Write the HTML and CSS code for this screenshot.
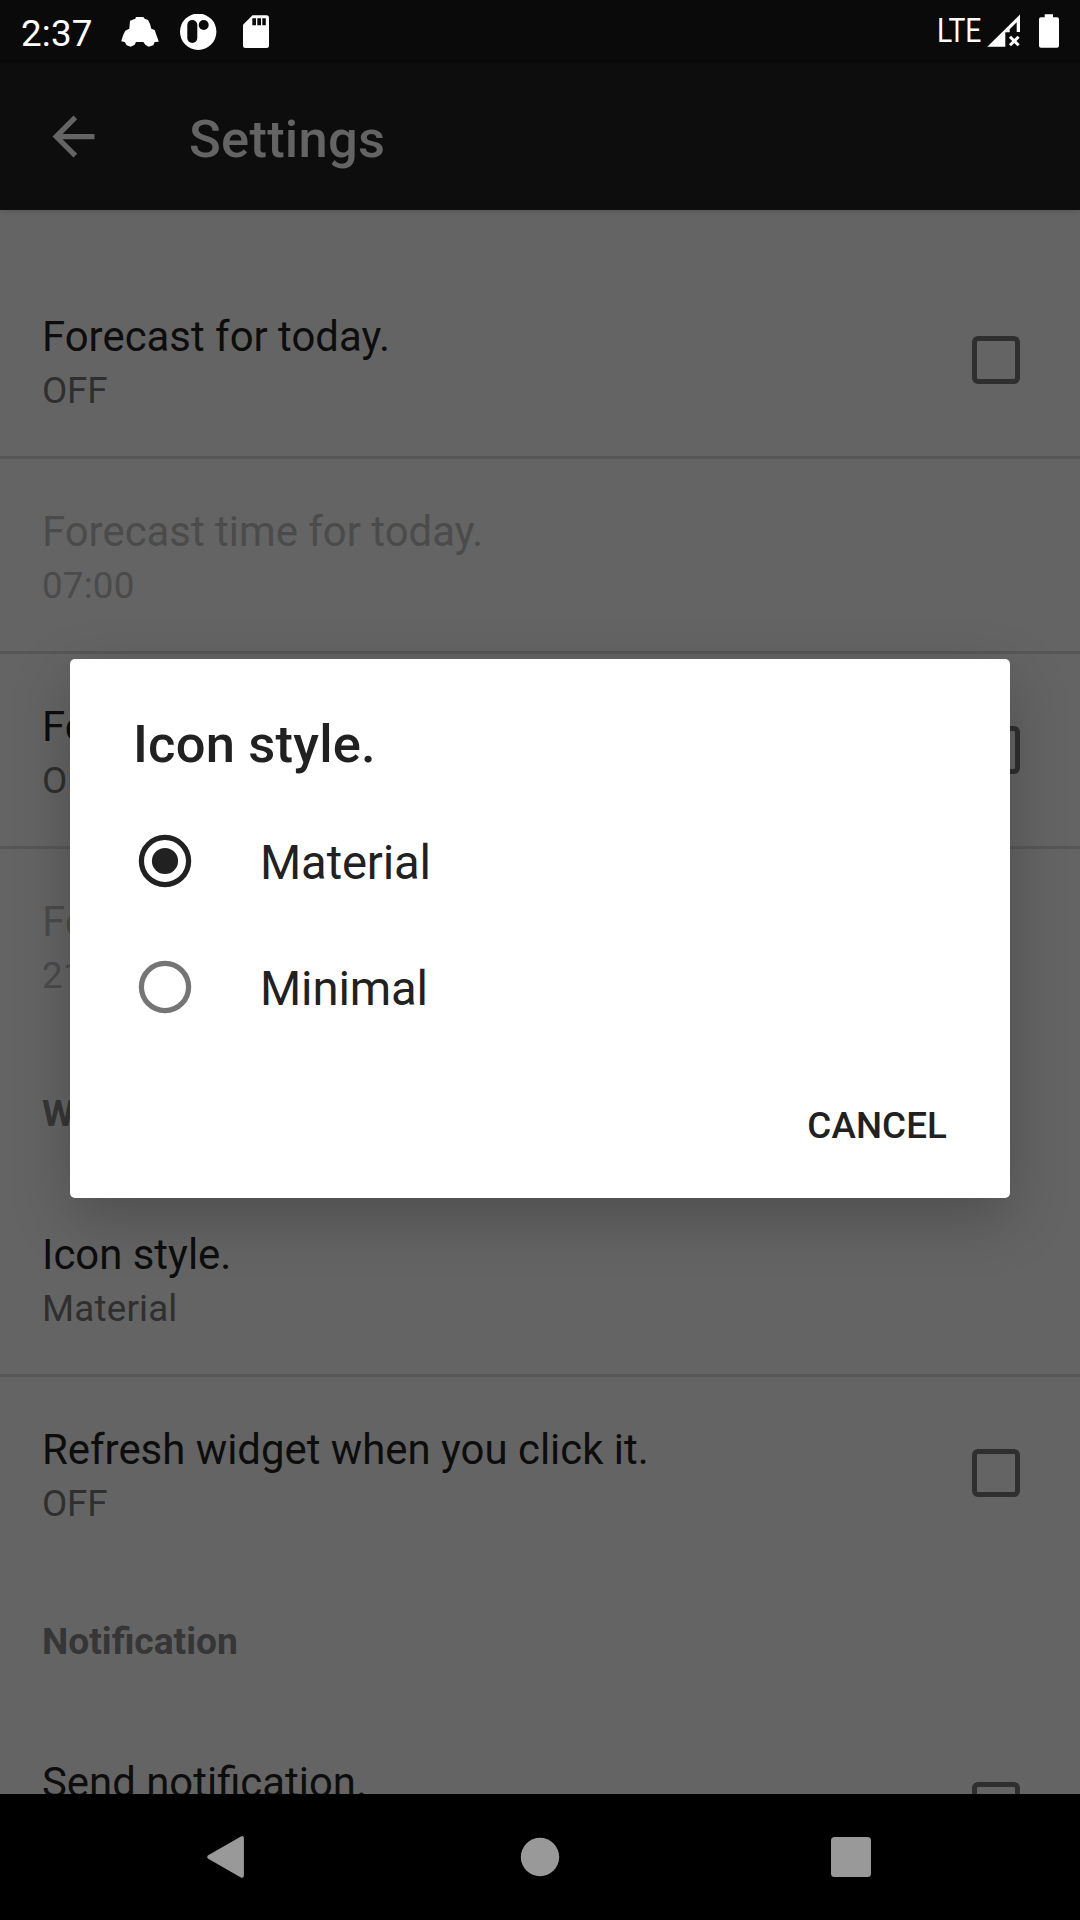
FILE: index.html
```html
<!DOCTYPE html>
<html lang="en">
<head>
<meta charset="utf-8">
<title>Settings</title>
<link rel="stylesheet" href="styles.css">
</head>
<body>
<div class="screen">
  <header class="status-bar">
    <span class="clock">2:37</span>
    <svg class="status-icons" width="150" height="36" viewBox="120 14 150 36" fill="#fff">
      <path d="M136 17H143.300L144.700 18.700L148 20L150 24L151.300 28.700L154.700 30L156 34L158 39.300L158.700 41.700L154.700 42L153.300 45.300L148.700 46.700L145.300 44.700L143.300 42H136L134.700 44.700L130.700 46.700L126.700 45.300L124.700 42L121.300 41.300L122 38.700L123.300 34.700L125.300 30.700L129.300 28.700L130 20.700L135.300 18.700Z"/>
      <circle cx="198.200" cy="31.700" r="18.200"/>
      <rect x="187.300" y="20" width="10" height="23" rx="5" fill="#0a0a0a"/>
      <circle cx="203.700" cy="25" r="5" fill="#0a0a0a"/>
      <path d="M252.500 15.200H266.500Q269 15.200 269 17.700V45.500Q269 48 266.500 48H245.500Q243 48 243 45.500V24.700Z"/>
      <path d="M252.300 18.300h3.700v7h-3.700zM257.300 18.300h3.700v7h-3.700zM262.300 18.300h3.500v7h-3.500z" fill="#0a0a0a"/>
    </svg>
    <span class="network">LTE</span>
    <svg class="signal-icons" width="74" height="36" viewBox="986 14 74 36" fill="#fff">
      <path d="M987.300 46.800L1020 14.500V32H1016.700V22.300L1009.700 29.300V32.300H1005.300V46.800Z"/>
      <path d="M1010 36.700L1018.600 45.300M1018.600 36.700L1010 45.300" stroke="#fff" stroke-width="3"/>
      <path d="M1044.700 14.300H1053V17.300H1057Q1059 17.300 1059 19.300V45.700Q1059 47.700 1057 47.700H1041Q1039 47.700 1039 45.700V19.300Q1039 17.300 1041 17.300H1044.700Z"/>
    </svg>
  </header>
  <div class="app-bar">
    <svg width="63" height="63" viewBox="0 0 24 24" fill="#646464"><path d="M20 11H7.830l5.590-5.590L12 4l-8 8 8 8 1.410-1.410L7.830 13H20v-2z"/></svg>
    <h1 class="app-title">Settings</h1>
  </div>
  <main class="settings">
    <div class="row divided">
      <div><div class="title">Forecast for today.</div><div class="summary">OFF</div></div>
      <span class="checkbox"></span>
    </div>
    <div class="row divided disabled">
      <div><div class="title">Forecast time for today.</div><div class="summary value">07:00</div></div>
    </div>
    <div class="row divided">
      <div><div class="title">Forecast for tomorrow.</div><div class="summary">OFF</div></div>
      <span class="checkbox"></span>
    </div>
    <div class="row disabled">
      <div><div class="title">Forecast time for tomorrow.</div><div class="summary value">21:00</div></div>
    </div>
    <h2 class="category">Widget</h2>
    <div class="row divided">
      <div><div class="title">Icon style.</div><div class="summary value">Material</div></div>
    </div>
    <div class="row">
      <div><div class="title">Refresh widget when you click it.</div><div class="summary">OFF</div></div>
      <span class="checkbox"></span>
    </div>
    <h2 class="category">Notification</h2>
    <div class="row">
      <div><div class="title">Send notification.</div><div class="summary">OFF</div></div>
      <span class="checkbox"></span>
    </div>
  </main>
  <nav class="nav-bar">
    <svg width="60" height="60" viewBox="0 0 60 60"><path d="M10.200 30L42.900 11.200V48.800Z" fill="#999" stroke="#999" stroke-width="4" stroke-linejoin="round"/></svg>
    <svg width="60" height="60" viewBox="0 0 60 60"><circle cx="30" cy="30" r="19.200" fill="#999"/></svg>
    <svg width="60" height="60" viewBox="0 0 60 60"><rect x="10" y="10" width="40" height="40" rx="3.500" fill="#999"/></svg>
  </nav>
  <section class="dialog">
    <h2 class="dialog-title">Icon style.</h2>
    <div class="option">
      <svg width="54" height="54" viewBox="0 0 54 54"><circle cx="27" cy="27" r="23.600" fill="none" stroke="#212121" stroke-width="5.250"/><circle cx="27" cy="27" r="13.100" fill="#212121"/></svg>
      <span>Material</span>
    </div>
    <div class="option">
      <svg width="54" height="54" viewBox="0 0 54 54"><circle cx="27" cy="27" r="23.600" fill="none" stroke="#757575" stroke-width="5.250"/></svg>
      <span>Minimal</span>
    </div>
    <div class="actions"><span class="cancel">CANCEL</span></div>
  </section>
</div>
</body>
</html>
```
FILE: styles.css
```css
* { box-sizing: border-box; }
body { margin: 0; font-family: Roboto, sans-serif; }
h1, h2 { margin: 0; }
svg { display: block; flex: none; }

.screen {
  position: relative;
  display: flex;
  flex-direction: column;
  width: 1080px;
  height: 1920px;
  overflow: hidden;
  background: #646464;
}

.status-bar {
  display: flex;
  flex: none;
  height: 63px;
  padding: 0 20px 0 21px;
  background: #0a0a0a;
  color: #fff;
}
.clock { width: 99px; font-size: 36.75px; line-height: 67px; letter-spacing: 0.2px; }
.status-icons { margin-top: 14px; }
.network {
  width: 49px;
  margin-left: auto;
  font-size: 32.5px;
  line-height: 62px;
  transform: scaleX(0.87);
  transform-origin: left;
}
.signal-icons { margin-top: 14px; }

.app-bar {
  display: flex;
  flex: none;
  align-items: center;
  height: 147px;
  padding-left: 42px;
  background: #0d0d0d;
  box-shadow: 0 1px 5px rgba(0, 0, 0, 0.15);
  color: #646464;
}
.app-title { margin-left: 84px; padding-top: 5px; font-size: 52.5px; font-weight: 500; line-height: 62px; letter-spacing: 0.25px; }

.settings { flex: 1; min-height: 0; padding-top: 54px; overflow: hidden; }
.row {
  display: flex;
  justify-content: space-between;
  height: 192px;
  padding: 48px 60px 0 42px;
  color: #0d0d0d;
}
.row.divided { height: 195px; border-bottom: 3px solid #575757; }
.title { font-size: 41.9px; line-height: 50px; }
.summary { margin-top: 7px; font-size: 36.75px; line-height: 43px; letter-spacing: -0.2px; color: #2f2f2f; }
.summary.value { letter-spacing: 0.2px; }
.disabled .title, .disabled .summary { color: #4b4b4b; }
.checkbox {
  width: 48px;
  height: 48px;
  margin-top: 24px;
  border: 5px solid #2f2f2f;
  border-radius: 6px;
}
.category { height: 141px; padding: 51px 42px 0; color: #363636; font-size: 37.2px; font-weight: 700; line-height: 43px; }

.nav-bar {
  display: flex;
  flex: none;
  justify-content: space-between;
  height: 126px;
  padding: 33px 199px 0;
  background: #000;
}

.dialog {
  position: absolute;
  top: 659px;
  left: 70px;
  width: 940px;
  height: 539px;
  padding: 54px 63px 0;
  border-radius: 5px;
  background: #fff;
  box-shadow: 0 20px 60px rgba(0, 0, 0, 0.22);
  color: #212121;
}
.dialog-title { height: 85px; font-size: 52.5px; font-weight: 500; line-height: 62px; letter-spacing: 0.2px; }
.option { display: flex; align-items: center; gap: 68px; height: 126px; padding-left: 5px; font-size: 47.25px; letter-spacing: -0.15px; }
.option span { padding-top: 4px; line-height: 56px; }
.actions { display: flex; justify-content: flex-end; padding-top: 54px; }
.cancel { font-size: 36.75px; font-weight: 500; line-height: 43px; letter-spacing: 0.1px; }
```
